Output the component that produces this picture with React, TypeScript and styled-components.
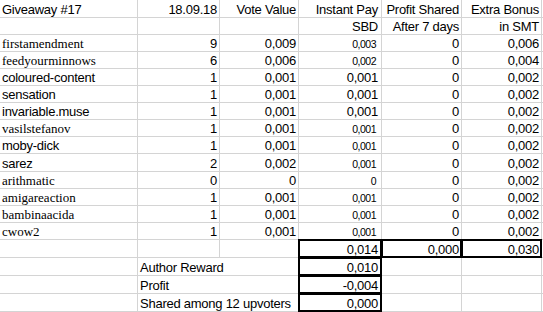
import React from 'react';
import styled, { createGlobalStyle } from 'styled-components';

const GlobalStyle = createGlobalStyle`
  html, body {
    margin: 0;
    padding: 0;
    background: #fff;
  }
`;

// gridlines come from the sheet background showing through the 1px gaps
const Sheet = styled.div`
  display: grid;
  grid-template-columns: 137px 81px 78px 82px 79px 79px 1px;
  grid-template-rows: 17px repeat(8, 16px) 17px repeat(4, 16px) repeat(4, 17px);
  gap: 1px;
  padding-bottom: 1px;
  width: 543px;
  background: #d4d4d4;
`;

type Font = 'sans' | 'serif' | 'small';

const fonts: Record<Font, string> = {
  sans: `font-family: "Liberation Sans", Arial, sans-serif; font-size: 13px; line-height: 15px; letter-spacing: -0.25px;`,
  serif: `font-family: "Liberation Serif", "Times New Roman", serif; font-size: 13px; line-height: 15px;`,
  small: `font-family: "Liberation Sans", Arial, sans-serif; font-size: 10.5px; line-height: 13px; letter-spacing: -0.5px;`,
};

const Cell = styled.div<{ $right?: boolean; $span?: number; $boxed?: boolean; $font?: Font; $pr?: number }>`
  position: relative;
  background: #fff;
  display: flex;
  align-items: flex-end;
  justify-content: ${(p) => (p.$right ? 'flex-end' : 'flex-start')};
  padding: 0 ${(p) => p.$pr ?? 2}px 0 2px;
  color: #000;
  white-space: nowrap;
  ${(p) => fonts[p.$font ?? 'sans']}
  ${(p) => (p.$span ? `grid-column: span ${p.$span};` : '')}

  ${(p) =>
    p.$boxed &&
    `
    &::after {
      content: '';
      position: absolute;
      top: -1px;
      left: -1px;
      right: -1px;
      bottom: -1px;
      border: 2px solid #000;
      z-index: 1;
      pointer-events: none;
    }
  `}
`;

const Num = (props: React.ComponentProps<typeof Cell>) => <Cell $right {...props} />;

type Voter = {
  name: string;
  serif?: boolean;
  votes: string;
  value: string;
  pay: string;
  smallPay?: boolean;
  shared: string;
  bonus: string;
};

const voters: Voter[] = [
  { name: 'firstamendment', serif: true, votes: '9', value: '0,009', pay: '0,003', smallPay: true, shared: '0', bonus: '0,006' },
  { name: 'feedyourminnows', serif: true, votes: '6', value: '0,006', pay: '0,002', smallPay: true, shared: '0', bonus: '0,004' },
  { name: 'coloured-content', votes: '1', value: '0,001', pay: '0,001', shared: '0', bonus: '0,002' },
  { name: 'sensation', votes: '1', value: '0,001', pay: '0,001', shared: '0', bonus: '0,002' },
  { name: 'invariable.muse', votes: '1', value: '0,001', pay: '0,001', shared: '0', bonus: '0,002' },
  { name: 'vasilstefanov', serif: true, votes: '1', value: '0,001', pay: '0,001', smallPay: true, shared: '0', bonus: '0,002' },
  { name: 'moby-dick', votes: '1', value: '0,001', pay: '0,001', smallPay: true, shared: '0', bonus: '0,002' },
  { name: 'sarez', votes: '2', value: '0,002', pay: '0,001', smallPay: true, shared: '0', bonus: '0,002' },
  { name: 'arithmatic', serif: true, votes: '0', value: '0', pay: '0', smallPay: true, shared: '0', bonus: '0,002' },
  { name: 'amigareaction', serif: true, votes: '1', value: '0,001', pay: '0,001', smallPay: true, shared: '0', bonus: '0,002' },
  { name: 'bambinaacida', serif: true, votes: '1', value: '0,001', pay: '0,001', smallPay: true, shared: '0', bonus: '0,002' },
  { name: 'cwow2', serif: true, votes: '1', value: '0,001', pay: '0,001', smallPay: true, shared: '0', bonus: '0,002' },
];

const summary = [
  { label: 'Author Reward', value: '0,010' },
  { label: 'Profit', value: '-0,004' },
  { label: 'Shared among 12 upvoters', value: '0,000' },
];

const App = () => {
  return (
    <>
      <GlobalStyle />
      <Sheet>
        <Cell>Giveaway #17</Cell>
        <Num>18.09.18</Num>
        <Num>Vote Value</Num>
        <Num $pr={3}>Instant Pay</Num>
        <Num>Profit Shared</Num>
        <Num>Extra Bonus</Num>
        <Cell />

        <Cell />
        <Cell />
        <Cell />
        <Num $pr={3}>SBD</Num>
        <Num>After 7 days</Num>
        <Num>in SMT</Num>
        <Cell />

        {voters.map((v) => (
          <React.Fragment key={v.name}>
            <Cell $font={v.serif ? 'serif' : 'sans'}>{v.name}</Cell>
            <Num>{v.votes}</Num>
            <Num>{v.value}</Num>
            <Num $font={v.smallPay ? 'small' : 'sans'} $pr={v.smallPay ? 5 : 3}>
              {v.pay}
            </Num>
            <Num>{v.shared}</Num>
            <Num>{v.bonus}</Num>
            <Cell />
          </React.Fragment>
        ))}

        <Cell />
        <Cell />
        <Cell />
        <Num $boxed $pr={3}>0,014</Num>
        <Num $boxed>0,000</Num>
        <Num $boxed>0,030</Num>
        <Cell />

        {summary.map((s) => (
          <React.Fragment key={s.label}>
            <Cell />
            <Cell $span={2}>{s.label}</Cell>
            <Num $boxed $pr={3}>{s.value}</Num>
            <Cell />
            <Cell />
            <Cell />
          </React.Fragment>
        ))}
      </Sheet>
    </>
  );
};

export default App;
